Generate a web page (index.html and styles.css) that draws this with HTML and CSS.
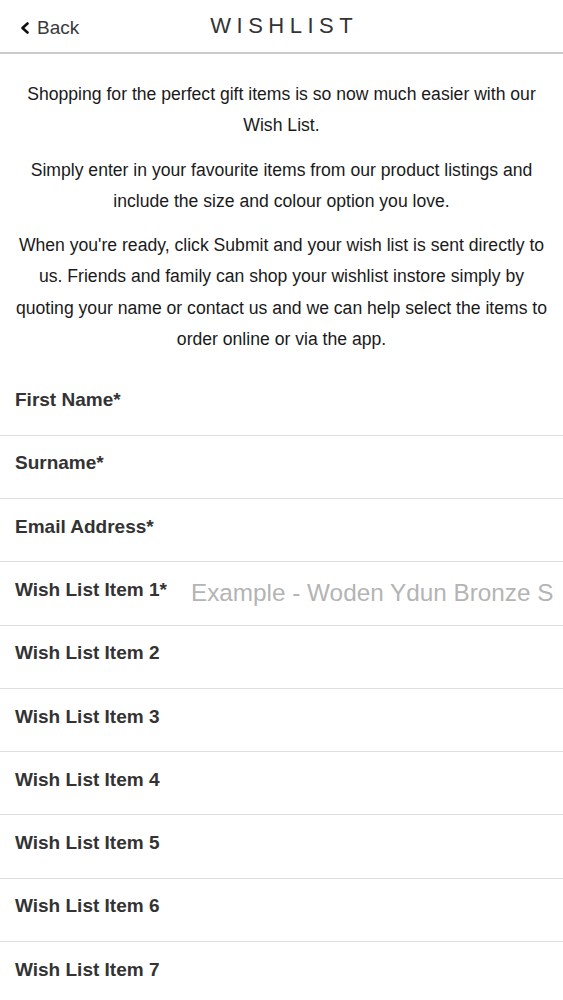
FILE: index.html
```html
<!DOCTYPE html>
<html lang="en">
<head>
    <meta charset="UTF-8">
    <meta name="viewport" content="width=device-width, initial-scale=1.0">
    <title>Wishlist</title>
    <link rel="stylesheet" href="styles.css">
</head>
<body>
    <header class="top-bar">
        <a class="back" href="#">
            <svg class="back-icon" width="10" height="12" viewBox="0 0 10 12">
                <polyline points="7.5,1.5 2.5,6 7.5,10.5" fill="none" stroke="#111" stroke-width="2.6" stroke-linecap="round" stroke-linejoin="round"/>
            </svg>
            <span>Back</span>
        </a>
        <h1 class="title">WISHLIST</h1>
        <div></div>
    </header>

    <section class="intro">
        <p>Shopping for the perfect gift items is so now much easier with our Wish List.</p>
        <p>Simply enter in your favourite items from our product listings and include the size and colour option you love.</p>
        <p>When you're ready, click Submit and your wish list is sent directly to us. Friends and family can shop your wishlist instore simply by quoting your name or contact us and we can help select the items to order online or via the app.</p>
    </section>

    <form class="wish-form">
        <div class="form-row">
            <label for="firstName">First Name*</label>
            <input type="text" id="firstName">
        </div>
        <div class="form-row">
            <label for="surname">Surname*</label>
            <input type="text" id="surname">
        </div>
        <div class="form-row">
            <label for="email">Email Address*</label>
            <input type="email" id="email">
        </div>
        <div class="form-row">
            <label for="item1">Wish List Item 1*</label>
            <input type="text" id="item1" placeholder="Example - Woden Ydun Bronze Size 9">
        </div>
        <div class="form-row">
            <label for="item2">Wish List Item 2</label>
            <input type="text" id="item2">
        </div>
        <div class="form-row">
            <label for="item3">Wish List Item 3</label>
            <input type="text" id="item3">
        </div>
        <div class="form-row">
            <label for="item4">Wish List Item 4</label>
            <input type="text" id="item4">
        </div>
        <div class="form-row">
            <label for="item5">Wish List Item 5</label>
            <input type="text" id="item5">
        </div>
        <div class="form-row">
            <label for="item6">Wish List Item 6</label>
            <input type="text" id="item6">
        </div>
        <div class="form-row">
            <label for="item7">Wish List Item 7</label>
            <input type="text" id="item7">
        </div>
    </form>
</body>
</html>
```

FILE: styles.css
```css
body {
    margin: 0;
    font-family: "Liberation Sans", Arial, sans-serif;
    color: #1a1a1a;
    background: #fff;
}
.top-bar {
    display: grid;
    grid-template-columns: 1fr auto 1fr;
    align-items: center;
    height: 52px;
    border-bottom: 2px solid #cacaca;
}
.back {
    display: flex;
    align-items: center;
    gap: 7px;
    padding-left: 20px;
    padding-top: 3px;
    color: #3a3a3a;
    font-size: 19px;
    text-decoration: none;
}
.back-icon {
    display: block;
}
.title {
    margin: 0;
    font-size: 22px;
    font-weight: normal;
    letter-spacing: 5.5px;
    margin-right: -5.5px;
    color: #333;
}
.intro {
    padding: 25px 14px 4px;
    text-align: center;
    font-size: 17.6px;
    line-height: 31.3px;
}
.intro p {
    margin: 0 0 13px;
}
.form-row {
    display: flex;
    align-items: center;
    height: 62.3px;
    padding-left: 15px;
    border-bottom: 1px solid #dedede;
}
.form-row label {
    flex: 0 0 176px;
    margin-bottom: 7px;
    font-size: 19px;
    font-weight: bold;
    color: #333;
}
.form-row input {
    flex: 1;
    min-width: 0;
    height: 40px;
    padding: 0 8px 0 0;
    border: none;
    outline: none;
    font-family: "Liberation Sans", Arial, sans-serif;
    font-size: 24.3px;
    color: #222;
    background: transparent;
}
.form-row input::placeholder {
    color: #b4b4b4;
}
```
